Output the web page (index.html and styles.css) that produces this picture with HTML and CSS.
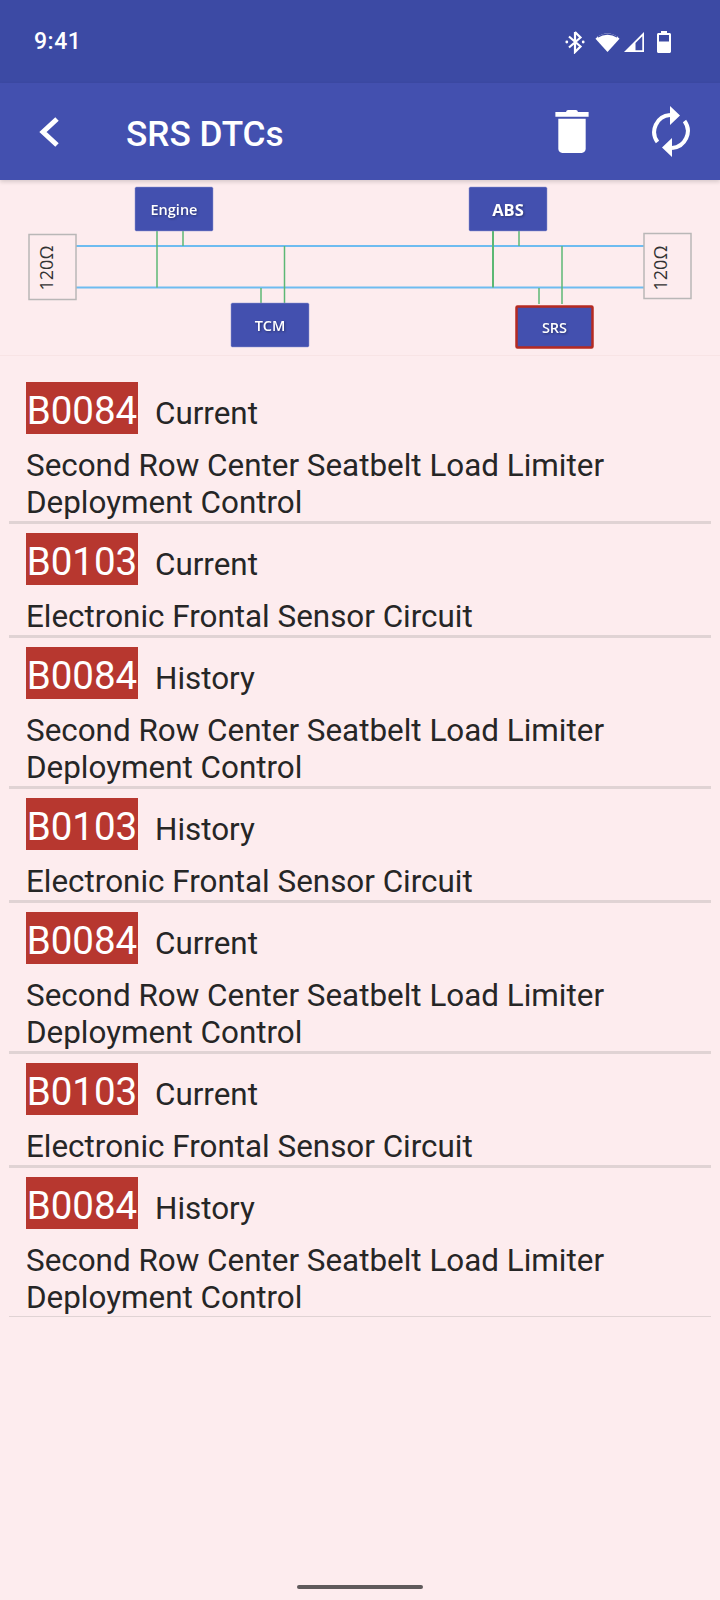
FILE: index.html
```html
<!DOCTYPE html>
<html lang="en">
<head>
  <meta charset="UTF-8">
  <meta name="viewport" content="width=device-width, initial-scale=1.0">
  <title>SRS DTCs</title>
  <link rel="stylesheet" href="styles.css">
</head>
<body>
  <div class="screen">
    <div class="status-bar">
      <span class="clock">9:41</span>
      <div class="status-icons">
        <svg class="ic-bt" width="20" height="24" viewBox="0 0 20 24"><path d="M10 2v20l5.500-5.500L4 6.500 M10 2l5.500 5.500L4 17.500" fill="none" stroke="#fff" stroke-width="2.200"/><circle cx="1.800" cy="12" r="1.400" fill="#fff"/><circle cx="18.200" cy="12" r="1.400" fill="#fff"/></svg>
        <svg class="ic-wifi" width="25" height="22" viewBox="0 0 26 22"><path d="M13 21.500L0.500 7.500C7.500 .5 18.500 .5 25.500 7.500z" fill="#fff"/><path d="M3 5.800C9 1.900 17 1.900 23 5.800" fill="none" stroke="#3c4aa4" stroke-width="1.300"/></svg>
        <svg class="ic-signal" width="22" height="22" viewBox="0 0 22 22"><path d="M21 1v20H1z M19.300 5.200L12.500 12v7.300h6.800z" fill="#fff" fill-rule="evenodd"/></svg>
        <svg class="ic-batt" width="14" height="22" viewBox="0 0 14 22"><path d="M4 0h6v2h2.500c.8 0 1.500.7 1.500 1.500V20.500c0 .8-.7 1.500-1.500 1.500h-11C.7 22 0 21.300 0 20.500V3.500C0 2.700.7 2 1.500 2H4z M2 4v6.500h10V4z" fill="#fff" fill-rule="evenodd"/></svg>
      </div>
    </div>

    <header class="toolbar">
      <svg class="ic-back" width="22" height="32" viewBox="0 0 22 32"><path d="M19 3L5 16l14 13" fill="none" stroke="#fff" stroke-width="5"/></svg>
      <h1 class="title">SRS DTCs</h1>
      <svg class="ic-trash" width="34" height="43" viewBox="0 0 34 44"><path d="M11 2c0-1 1-2 2-2h8c1 0 2 1 2 2h11v5H0V2z M3 9h28v31c0 2-2 4-4 4H7c-2 0-4-2-4-4z" fill="#fff"/></svg>
      <svg class="ic-sync" width="38" height="51" viewBox="0 0 38 51"><path d="M18 9A17 17 0 0 0 5.500 36 M20 42A17 17 0 0 0 32.500 15" fill="none" stroke="#fff" stroke-width="4"/><path d="M18 0l10 9.500-10 9.500z M20 51l-10-9.500 10-9.500z" fill="#fff"/></svg>
    </header>

    <!-- bus diagram -->
    <div class="diagram">
      <svg width="720" height="176" viewBox="0 180 720 176">
        <g stroke="#6ebcf0" stroke-width="2">
          <path d="M76 246H644"/>
          <path d="M76 287.500H644"/>
        </g>
        <g stroke="#5cb874" stroke-width="1.500" fill="none">
          <path d="M157 230V287.500"/>
          <path d="M183 230V246"/>
          <path d="M261 288V303"/>
          <path d="M284.500 246V303"/>
          <path d="M493 230V287.500" stroke-width="2"/>
          <path d="M519 230V246"/>
          <path d="M539 288V304"/>
          <path d="M562 246V304"/>
        </g>
        <rect class="term" x="29" y="234.500" width="47" height="65"/>
        <rect class="term" x="644" y="233.500" width="47" height="65"/>
        <text class="term-txt" transform="translate(46 268) rotate(-90)">120Ω</text>
        <text class="term-txt" transform="translate(660 268) rotate(-90)">120Ω</text>
        <rect class="node" x="135" y="187" width="78" height="44" rx="1.500"/>
        <rect class="node" x="231" y="303" width="78" height="44" rx="1.500"/>
        <rect class="node" x="469" y="187" width="78" height="44" rx="1.500"/>
        <rect class="node node-on" x="516.500" y="306.500" width="76" height="41" rx="1"/>
        <text class="node-txt" x="174" y="215">Engine</text>
        <text class="node-txt" x="270" y="331">TCM</text>
        <text class="node-txt node-big" x="508" y="216">ABS</text>
        <text class="node-txt" x="554.500" y="333">SRS</text>
      </svg>
    </div>

    <ul class="dtc-list">
      <li class="dtc">
        <div class="dtc-head"><span class="code">B0084</span><span class="state">Current</span></div>
        <p class="desc">Second Row Center Seatbelt Load Limiter Deployment Control</p>
      </li>
      <li class="dtc">
        <div class="dtc-head"><span class="code">B0103</span><span class="state">Current</span></div>
        <p class="desc">Electronic Frontal Sensor Circuit</p>
      </li>
      <li class="dtc">
        <div class="dtc-head"><span class="code">B0084</span><span class="state">History</span></div>
        <p class="desc">Second Row Center Seatbelt Load Limiter Deployment Control</p>
      </li>
      <li class="dtc">
        <div class="dtc-head"><span class="code">B0103</span><span class="state">History</span></div>
        <p class="desc">Electronic Frontal Sensor Circuit</p>
      </li>
      <li class="dtc">
        <div class="dtc-head"><span class="code">B0084</span><span class="state">Current</span></div>
        <p class="desc">Second Row Center Seatbelt Load Limiter Deployment Control</p>
      </li>
      <li class="dtc">
        <div class="dtc-head"><span class="code">B0103</span><span class="state">Current</span></div>
        <p class="desc">Electronic Frontal Sensor Circuit</p>
      </li>
      <li class="dtc dtc-last">
        <div class="dtc-head"><span class="code">B0084</span><span class="state">History</span></div>
        <p class="desc">Second Row Center Seatbelt Load Limiter Deployment Control</p>
      </li>
    </ul>

    <div class="nav-handle"></div>
  </div>
</body>
</html>
```

FILE: styles.css
```css
* { box-sizing: border-box; }
html, body { margin: 0; padding: 0; }
body { font-family: Roboto, "Noto Sans", sans-serif; background: #fdecee; }
.screen { position: relative; width: 720px; height: 1600px; overflow: hidden; background: #fdecee; }

.status-bar { height: 83px; background: #3c4aa4; display: flex; align-items: center; justify-content: space-between; padding: 0 49px 0 34px; color: #fff; }
.clock { font-size: 23px; font-weight: 500; letter-spacing: 0.5px; }
.status-icons { display: flex; align-items: center; }
.ic-bt { margin-right: 10px; }
.ic-wifi { margin-right: 3px; }
.ic-signal { margin-right: 12px; }

.toolbar { height: 97px; background: #4350af; display: flex; align-items: center; padding: 0 30px 0 38px; box-shadow: 0 2px 4px rgba(0,0,0,0.15); position: relative; }
.ic-back { flex: none; }
.title { flex: 1; margin: 4px 0 0 66px; color: #fff; font-size: 35.200px; font-weight: 500; }
.ic-trash { margin-right: 63px; }

.diagram { height: 176px; border-bottom: 1px solid #f8e4e5; }
.diagram svg { display: block; }
.term { fill: #fdecee; stroke: #b9b7b7; stroke-width: 1.500; }
.term-txt { font-family: "Open Sans", sans-serif; font-size: 18px; fill: #333; text-anchor: middle; dominant-baseline: central; }
.node { fill: #4350af; stroke: #8d94d0; stroke-width: 0.500; }
.node-on { stroke: #b52a22; stroke-width: 2.500; }
.node-txt { font-family: "Open Sans", sans-serif; font-size: 14.500px; font-weight: 600; fill: #fff; text-anchor: middle; filter: drop-shadow(1px 1px 1px rgba(0,0,0,0.35)); }
.node-big { font-size: 16.500px; font-weight: 700; }

.dtc-list { list-style: none; margin: 0; padding: 26px 9px 0; }
.dtc { padding: 0 0 1px 17px; border-bottom: 3px solid #e0d3d4; margin-bottom: 9px; }
.dtc-last { border-bottom: 1px solid #e0d3d4; }
.dtc-head { display: flex; align-items: center; height: 52px; margin-bottom: 13px; }
.code { background: #b7372f; color: #fff; font-size: 38.500px; line-height: 58px; height: 52px; width: 112px; text-align: center; white-space: nowrap; }
.state { margin-left: 17px; padding-top: 10px; font-size: 31.400px; color: #262626; }
.desc { margin: 0 0 -1px; font-size: 31.400px; line-height: 37px; color: #262626; }

.nav-handle { position: absolute; left: 297px; top: 1585px; width: 126px; height: 4px; border-radius: 2px; background: #5f5a5b; }
```
